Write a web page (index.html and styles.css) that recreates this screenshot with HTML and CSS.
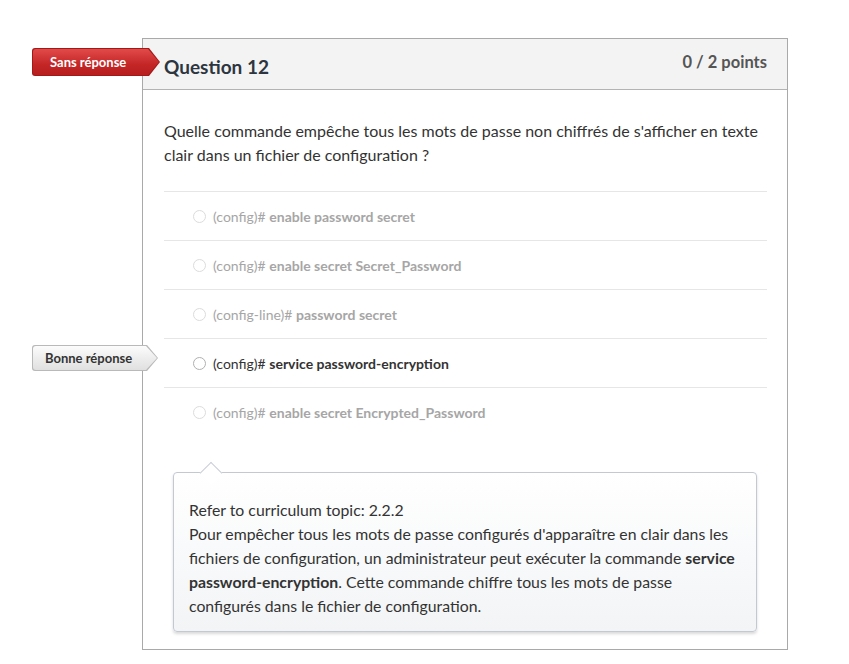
FILE: index.html
```html
<!DOCTYPE html>
<html lang="fr">
<head>
<meta charset="utf-8">
<link rel="stylesheet" href="styles.css">
</head>
<body>
<div class="card">
  <div class="badge badge-red"><span>Sans réponse</span></div>
  <div class="header">
    <h2 class="title">Question 12</h2>
    <div class="points">0 / 2 points</div>
  </div>
  <div class="content">
    <p class="question">Quelle commande empêche tous les mots de passe non chiffrés de s'afficher en texte clair dans un fichier de configuration ?</p>
    <ul class="options">
      <li class="option"><span class="radio"></span><span>(config)# <b>enable password secret</b></span></li>
      <li class="option"><span class="radio"></span><span>(config)# <b>enable secret Secret_Password</b></span></li>
      <li class="option"><span class="radio"></span><span>(config-line)# <b>password secret</b></span></li>
      <li class="option correct">
        <div class="badge badge-gray"><span>Bonne réponse</span></div>
        <span class="radio"></span><span>(config)# <b>service password-encryption</b></span>
      </li>
      <li class="option"><span class="radio"></span><span>(config)# <b>enable secret Encrypted_Password</b></span></li>
    </ul>
    <div class="feedback">
      <p>Refer to curriculum topic: 2.2.2<br>Pour empêcher tous les mots de passe configurés d'apparaître en clair dans les fichiers de configuration, un administrateur peut exécuter la commande <b>service password-encryption</b>. Cette commande chiffre tous les mots de passe configurés dans le fichier de configuration.</p>
    </div>
  </div>
</div>
</body>
</html>
```

FILE: styles.css
```css
* { box-sizing: border-box; }
html, body { margin: 0; padding: 0; background: #fff; }
body {
  font-family: Lato, "Open Sans", sans-serif;
  color: #333;
  padding: 38px 0 13px 142px;
}
.card {
  position: relative;
  width: 646px;
  border: 1px solid #a9a9a9;
  background: #fff;
}
.header {
  display: flex;
  justify-content: space-between;
  align-items: flex-start;
  height: 51px;
  background: #f3f3f3;
  border-bottom: 1px solid #b3b3b3;
  padding: 0 20px 0 21px;
}
.title {
  margin: 16px 0 0;
  font-size: 19px;
  font-weight: 700;
  line-height: 24px;
  color: #2d3640;
}
.points {
  margin-top: 12px;
  font-size: 16.5px;
  font-weight: 700;
  line-height: 22px;
  color: #555;
}
.content {
  padding: 29px 20px 17px 21px;
}
.question {
  margin: 0 0 24px;
  font-size: 16px;
  line-height: 24px;
  color: #333;
}
.options {
  list-style: none;
  margin: 0;
  padding: 0;
}
.option {
  position: relative;
  display: flex;
  align-items: center;
  height: 49px;
  border-top: 1px solid #e6e6e6;
  padding-left: 29px;
  font-size: 14px;
  color: #a6a6a6;
  gap: 7px;
}
.option b { font-weight: 700; }
.radio {
  width: 13px;
  height: 13px;
  border: 1px solid #dcdcdc;
  border-radius: 50%;
  background: #fff;
  flex: none;
}
.option.correct { color: #333; }
.option.correct .radio { border-color: #b0b0b0; }
.badge {
  position: absolute;
  padding: 1px;
  clip-path: polygon(0 0, calc(100% - 11px) 0, 100% 50%, calc(100% - 11px) 100%, 0 100%);
}
.badge span {
  display: block;
  height: 100%;
  clip-path: polygon(0 0, calc(100% - 11px) 0, 100% 50%, calc(100% - 11px) 100%, 0 100%);
  border-radius: 3px 0 0 3px;
  font-weight: 700;
  font-size: 13px;
  text-align: left;
}
.badge-red {
  left: -111px;
  top: 9px;
  width: 128px;
  height: 28px;
  background: #a51818;
  border-radius: 3px 0 0 3px;
}
.badge-red span {
  background: linear-gradient(#e24a4a, #c42626 60%, #b71e1e);
  color: #fff;
  line-height: 26px;
  padding-left: 17px;
}
.badge-gray {
  left: -132px;
  top: 6px;
  width: 126px;
  height: 26px;
  background: #b9b9b9;
  border-radius: 3px 0 0 3px;
}
.badge-gray span {
  background: linear-gradient(#fcfcfc, #ececec 55%, #e0e0e0);
  color: #333;
  line-height: 24px;
  padding-left: 12px;
}
.feedback {
  position: relative;
  margin: 36px 10px 0 9px;
  border: 1px solid #c3c9d2;
  border-radius: 4px;
  background: linear-gradient(#fff, #f2f4f6);
  box-shadow: 0 2px 3px rgba(0,0,0,0.15);
  padding: 25px 16px 13px 15px;
}
.feedback::before {
  content: "";
  position: absolute;
  left: 29px;
  top: -8px;
  width: 15px;
  height: 15px;
  background: #fff;
  border-top: 1px solid #c9ced6;
  border-left: 1px solid #c9ced6;
  transform: rotate(45deg);
}
.feedback p {
  margin: 0;
  font-size: 15.8px;
  line-height: 24px;
  color: #333;
}
```
